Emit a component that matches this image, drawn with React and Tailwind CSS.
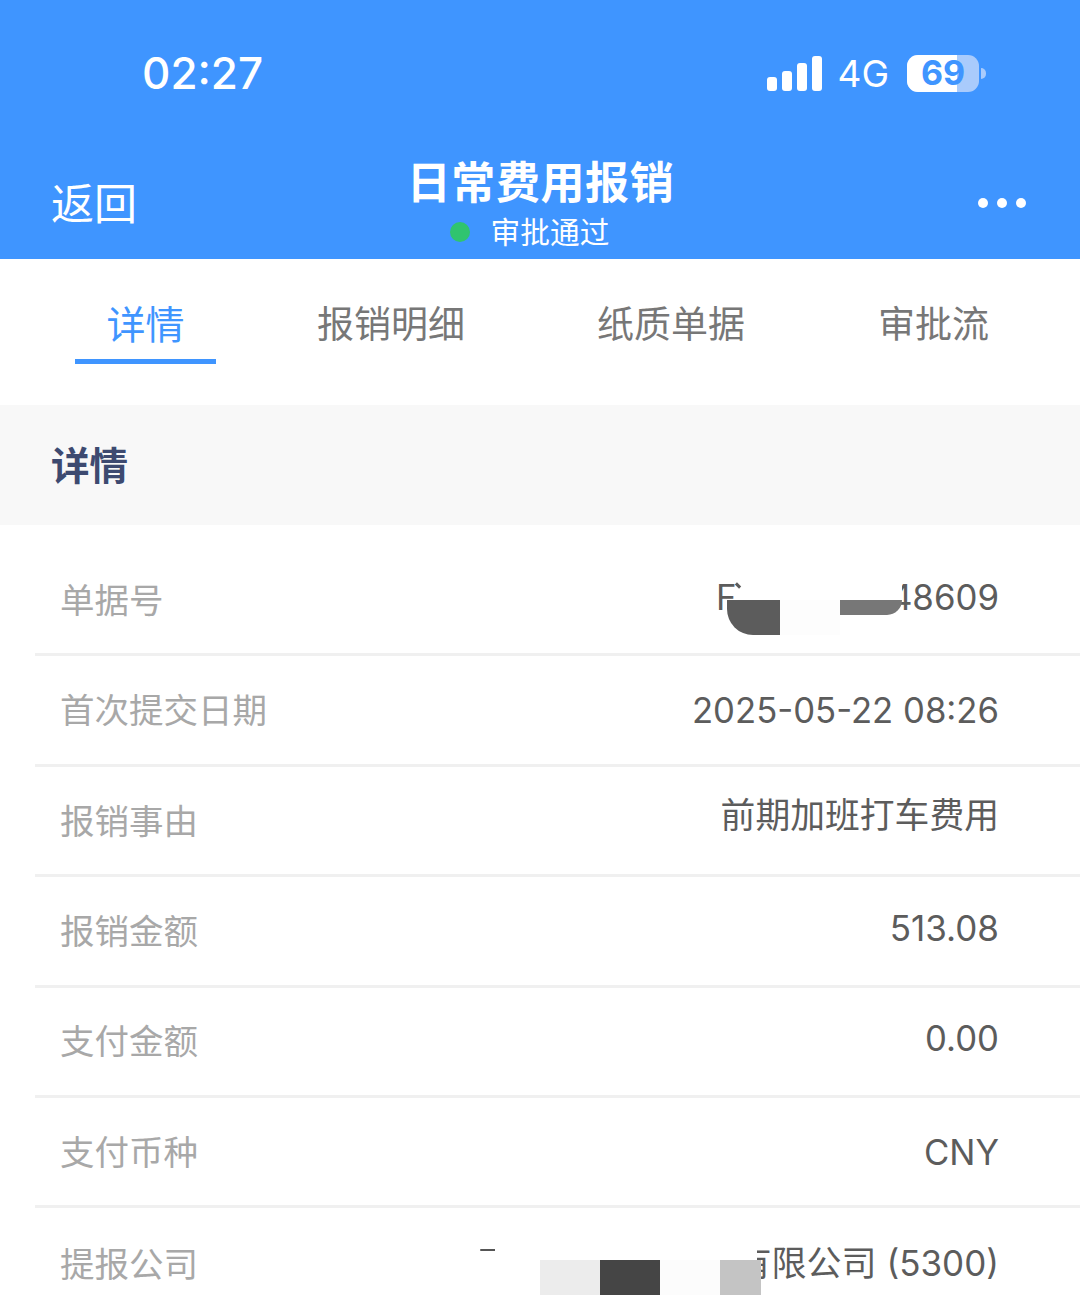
import React from "react";

const font = { fontFamily: '"Inter", "Noto Sans CJK SC", sans-serif' };

const rows = [
  { label: "单据号", value: "F", tail: "48609", nudge: "-mt-[6px] text-[34.8px]" },
  { label: "首次提交日期", value: "2025-05-22 08:26", nudge: "mt-0 text-[34.7px]" },
  { label: "报销事由", value: "前期加班打车费用", nudge: "-mt-[10px] text-[34.8px]" },
  { label: "报销金额", value: "513.08", nudge: "-mt-[5px] text-[35px]" },
  { label: "支付金额", value: "0.00", nudge: "-mt-[6px] text-[34.7px]" },
  { label: "支付币种", value: "CNY", nudge: "mt-[1px] text-[34.7px]" },
];

const tabs = [
  { name: "详情", active: true, cls: "w-[141px] ml-[75px]" },
  { name: "报销明细", cls: "ml-[101px]" },
  { name: "纸质单据", cls: "ml-[132px]" },
  { name: "审批流", cls: "ml-[133px]" },
];

const SignalBars = () => (
  <div className="flex items-end gap-[5px] h-[36px]">
    <div className="w-[10px] h-[14px] rounded-[3px] bg-white" />
    <div className="w-[10px] h-[20px] rounded-[3px] bg-white" />
    <div className="w-[10px] h-[28px] rounded-[3px] bg-white" />
    <div className="w-[10px] h-[35px] rounded-[3px] bg-white" />
  </div>
);

const Battery = () => (
  <div className="flex items-center">
    <div className="relative w-[72px] h-[37px] rounded-[11px] bg-[#a9cbfc]">
      <div className="absolute left-0 top-0 bottom-0 w-[50px] rounded-l-[11px] bg-white" />
      <span className="absolute inset-0 flex items-center justify-center text-[34px] font-bold text-[#3f95ff] leading-none">
        69
      </span>
    </div>
    <div className="w-[5px] h-[11px] ml-[2px] rounded-r-full bg-[#a9cbfc]" />
  </div>
);

export default function App() {
  return (
    <div className="w-[1080px] h-[1300px] overflow-hidden bg-white relative" style={font}>
      {/* header */}
      <div className="relative h-[259px] bg-[#3f95ff] text-white">
        <div className="flex items-center justify-between h-[146px] pl-[142px] pr-[94px]">
          <span className="text-[44px] font-medium leading-none">02:27</span>
          <div className="flex items-center">
            <SignalBars />
            <span className="ml-[15px] mr-[18px] text-[37px] leading-none">4G</span>
            <Battery />
          </div>
        </div>
        <div className="flex items-start justify-between pl-[51px] pr-[54px]">
          <span className="mt-[37px] text-[43px] leading-none font-normal">返回</span>
          <div className="flex flex-col items-center -ml-[34px] mt-[9px]">
            <span className="text-[44px] leading-[56px] font-bold tracking-[0.6px]">日常费用报销</span>
            <div className="flex items-center mt-[2px] -ml-[22px]">
              <div className="w-[20px] h-[20px] rounded-full bg-[#30c46f]" />
              <span className="ml-[21px] text-[29.7px] leading-[38px] font-normal">审批通过</span>
            </div>
          </div>
          <div className="flex gap-[9px] mt-[52px]">
            <div className="w-[10px] h-[10px] rounded-full bg-white" />
            <div className="w-[10px] h-[10px] rounded-full bg-white" />
            <div className="w-[10px] h-[10px] rounded-full bg-white" />
          </div>
        </div>
      </div>

      {/* tabs */}
      <div className="flex items-start h-[146px]">
        {tabs.map((t) => (
          <div key={t.name} className={t.cls}>
            <div
              className={`pt-[43px] pb-[11px] text-center leading-[46px] font-normal ${
                t.active
                  ? "text-[39px] text-[#3f95ff] border-b-[5px] border-[#3f95ff]"
                  : "text-[37px] text-[#777777]"
              }`}
            >
              {t.name}
            </div>
          </div>
        ))}
      </div>

      {/* section title */}
      <div className="flex items-center h-[120px] pl-[51px] bg-[#f8f8f8]">
        <span className="mt-[4px] text-[38.5px] font-bold text-[#3d4a70]">详情</span>
      </div>

      {/* detail rows */}
      <div className="pl-[35px] pt-[21px]">
        {rows.map((r) => (
          <div
            key={r.label}
            className="flex items-center justify-between h-[110.4px] pl-[25px] pr-[81px] border-b-[3px] border-[#f0f0f0]"
          >
            <span className="mt-[2px] text-[34.5px] font-normal text-[#a8a8a8]">{r.label}</span>
            {r.tail ? (
              <div className={`flex justify-between w-[283px] font-normal text-[#5c5c5c] ${r.nudge}`}>
                <span>{r.value}</span>
                <span>{r.tail}</span>
              </div>
            ) : (
              <span className={`font-normal text-[#5c5c5c] ${r.nudge}`}>{r.value}</span>
            )}
          </div>
        ))}
        <div className="flex items-center justify-between h-[110.4px] pl-[25px] pr-[81px]">
          <span className="mt-[2px] text-[34.5px] font-normal text-[#a8a8a8]">提报公司</span>
          <span className="mt-0 text-[35px] font-normal text-[#5c5c5c]">有限公司 (5300)</span>
        </div>
      </div>

      {/* redaction blocks */}
      <div className="absolute left-[742px] top-[575px] w-[160px] h-[25px] bg-white" />
      <div className="absolute left-[735px] top-[584px] w-[6px] h-[3px] rotate-45 bg-[#5c5c5c]" />
      <div className="absolute left-[727px] top-[600px] flex">
        <div className="w-[53px] h-[35px] bg-[#5c5c5c] rounded-bl-[26px]" />
        <div className="w-[60px] h-[35px] bg-[#fdfdfd]" />
        <div className="w-[62px] h-[15px] bg-[#777777] rounded-br-[22px]" />
      </div>
      <div className="absolute left-[495px] top-[1240px] w-[262px] h-[20px] bg-white" />
      <div className="absolute left-[540px] top-[1260px] flex">
        <div className="w-[60px] h-[35px] bg-[#ececec]" />
        <div className="w-[60px] h-[35px] bg-[#454545]" />
        <div className="w-[60px] h-[35px] bg-[#fcfcfc]" />
        <div className="w-[41px] h-[35px] bg-[#c4c4c4]" />
      </div>
      <div className="absolute left-[480px] top-[1249px] w-[15px] h-[2px] bg-[#555555] rounded-l-full" />
    </div>
  );
}
